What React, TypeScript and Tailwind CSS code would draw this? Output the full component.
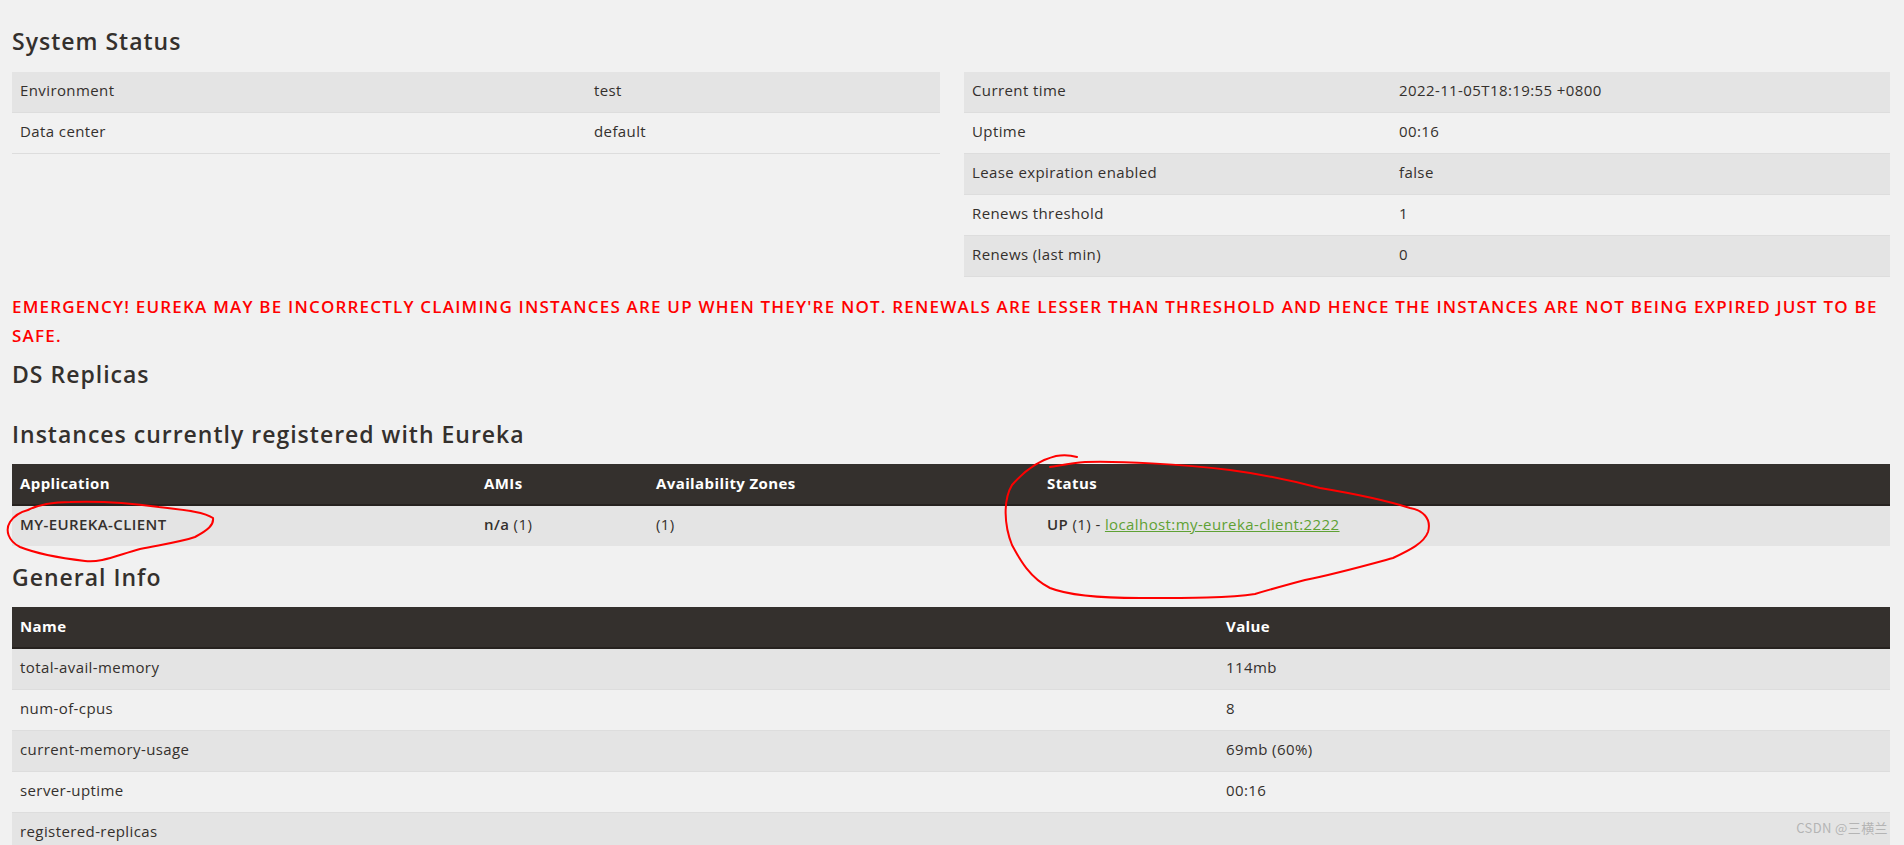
import React from 'react';

const statusLeft = [
  ['Environment', 'test'],
  ['Data center', 'default'],
];

const statusRight = [
  ['Current time', '2022-11-05T18:19:55 +0800'],
  ['Uptime', '00:16'],
  ['Lease expiration enabled', 'false'],
  ['Renews threshold', '1'],
  ['Renews (last min)', '0'],
];

const generalInfo = [
  ['total-avail-memory', '114mb'],
  ['num-of-cpus', '8'],
  ['current-memory-usage', '69mb (60%)'],
  ['server-uptime', '00:16'],
  ['registered-replicas', ''],
];

const rowBg = (i: number) => (i % 2 === 0 ? 'bg-[#e4e4e4]' : 'bg-[#f1f1f1]');

const Heading: React.FC<{ children: React.ReactNode; className?: string }> = ({ children, className }) => (
  <h1 className={`text-[23px] leading-[26px] tracking-[1px] font-semibold text-[#34302d] ${className ?? ''}`}>{children}</h1>
);

const KeyValueTable: React.FC<{ rows: string[][]; firstCol: string }> = ({ rows, firstCol }) => (
  <table className="w-full table-fixed border-collapse">
    <colgroup>
      <col className={firstCol} />
      <col />
    </colgroup>
    <tbody>
      {rows.map((r, i) => (
        <tr key={r[0]} className={`${rowBg(i)} border-b border-[#dddddd]`}>
          <td className="px-2 pt-[8px] pb-[12px] leading-5">{r[0]}</td>
          <td className="px-2 pt-[8px] pb-[12px] leading-5">{r[1]}</td>
        </tr>
      ))}
    </tbody>
  </table>
);

export default function App() {
  return (
    <div className="relative min-h-[845px] bg-[#f1f1f1] text-[15px] tracking-[0.4px] text-[#34302d] font-['Open_Sans',sans-serif] pl-3 pr-[14px] pt-7 overflow-hidden">
      <Heading>System Status</Heading>
      <div className="mt-[18px] flex gap-6 items-start">
        <div className="w-[928px]">
          <KeyValueTable rows={statusLeft} firstCol="w-[574px]" />
        </div>
        <div className="w-[926px]">
          <KeyValueTable rows={statusRight} firstCol="w-[427px]" />
        </div>
      </div>

      <h4 className="mt-[15px] text-[17px] leading-[29px] tracking-[1.2px] font-semibold uppercase text-[#ff0000]">
        Emergency! Eureka may be incorrectly claiming instances are up when they're not. Renewals are lesser than threshold and hence the instances are not being expired just to be safe.
      </h4>

      <Heading className="mt-[11px]">DS Replicas</Heading>
      <Heading className="mt-[34px]">Instances currently registered with Eureka</Heading>

      <table className="mt-[17px] w-full table-fixed border-collapse">
        <colgroup>
          <col className="w-[464px]" />
          <col className="w-[172px]" />
          <col className="w-[391px]" />
          <col />
        </colgroup>
        <thead>
          <tr className="bg-[#34302d] text-white border-b-2 border-[#26221f]">
            <th className="px-2 pt-[9px] pb-[11px] leading-5 text-left font-bold">Application</th>
            <th className="px-2 pt-[9px] pb-[11px] leading-5 text-left font-bold">AMIs</th>
            <th className="px-2 pt-[9px] pb-[11px] leading-5 text-left font-bold">Availability Zones</th>
            <th className="px-2 pt-[9px] pb-[11px] leading-5 text-left font-bold">Status</th>
          </tr>
        </thead>
        <tbody>
          <tr className="bg-[#e4e4e4]">
            <td className="px-2 pt-[8px] pb-[12px] leading-5">
              <b className="font-semibold">MY-EUREKA-CLIENT</b>
            </td>
            <td className="px-2 pt-[8px] pb-[12px] leading-5">
              <b className="font-semibold">n/a</b> (1)
            </td>
            <td className="px-2 pt-[8px] pb-[12px] leading-5">(1)</td>
            <td className="px-2 pt-[8px] pb-[12px] leading-5">
              <b className="font-semibold">UP</b> (1) -{' '}
              <a href="#" className="text-[#5fa134] underline">
                localhost:my-eureka-client:2222
              </a>
            </td>
          </tr>
        </tbody>
      </table>

      <Heading className="mt-[18px]">General Info</Heading>

      <table className="mt-[17px] w-full table-fixed border-collapse">
        <colgroup>
          <col className="w-[1206px]" />
          <col />
        </colgroup>
        <thead>
          <tr className="bg-[#34302d] text-white border-b-2 border-[#26221f]">
            <th className="px-2 pt-[9px] pb-[11px] leading-5 text-left font-bold">Name</th>
            <th className="px-2 pt-[9px] pb-[11px] leading-5 text-left font-bold">Value</th>
          </tr>
        </thead>
        <tbody>
          {generalInfo.map((r, i) => (
            <tr key={r[0]} className={`${rowBg(i)} border-b border-[#dddddd]`}>
              <td className="px-2 pt-[8px] pb-[12px] leading-5">{r[0]}</td>
              <td className="px-2 pt-[8px] pb-[12px] leading-5">{r[1]}</td>
            </tr>
          ))}
        </tbody>
      </table>

      {/* hand drawn annotations */}
      <svg className="absolute left-0 top-0 pointer-events-none" width="1904" height="845" fill="none">
        <path
          d="M28 510 C40 504 55 502 70 502 C95 501 130 503 159 507 C185 510 205 512 213 518 C214 525 208 530 195 537 C180 542 165 544 140 549 C115 556 100 563 85 561 C60 558 35 553 20 547 C8 541 5 530 10 522 C14 516 20 512 28 510"
          stroke="#ff0000"
          strokeWidth="2"
          strokeLinecap="round"
        />
        <path
          d="M1077 457 C1070 455 1062 455 1056 456 C1040 460 1025 470 1012 485 C1003 500 1004 525 1012 545 C1020 560 1030 578 1050 588 C1070 596 1100 598 1140 598 C1190 598 1230 598 1255 594 C1275 588 1290 584 1305 580 C1335 574 1360 567 1393 558 C1410 550 1424 543 1428 532 C1432 518 1422 510 1410 508 C1385 500 1350 493 1320 488 C1290 480 1260 474 1230 470 C1180 464 1120 461 1085 462 C1070 463 1058 466 1050 467"
          stroke="#ff0000"
          strokeWidth="2"
          strokeLinecap="round"
        />
      </svg>

      <div className="absolute right-[16px] top-[818px] text-[13px] text-[#b4b4b4] font-['Noto_Sans_CJK_SC',sans-serif]">
        CSDN @三横兰
      </div>
    </div>
  );
}
